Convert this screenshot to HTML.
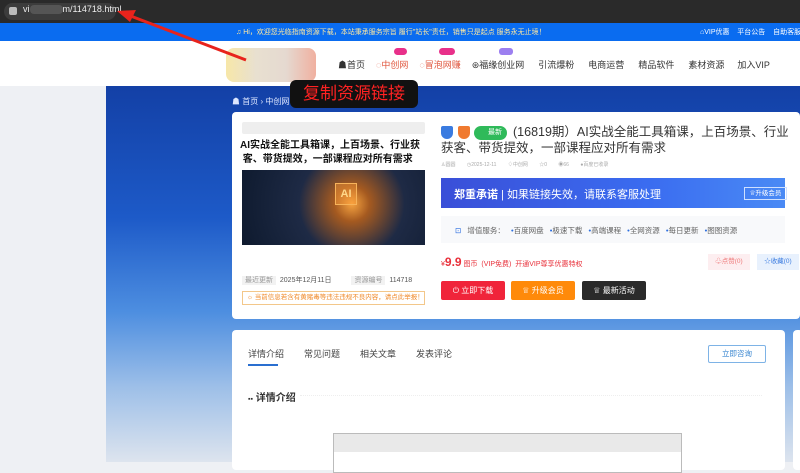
<!DOCTYPE html>
<html><head><meta charset="utf-8"><style>
*{margin:0;padding:0;box-sizing:border-box}
body{width:800px;height:462px;overflow:hidden;position:relative;font-family:"Liberation Sans","Noto Sans CJK SC",sans-serif;background:#eef0f4;font-size:12px;color:#333}
.abs{position:absolute;white-space:nowrap}
</style></head><body>
<div class="abs" style="left:0;top:0;width:800px;height:23px;background:#2a2a2a"></div>
<div class="abs" style="left:4px;top:3px;width:112px;height:17px;border-radius:9px;background:#3c3c3c"></div>
<div class="abs" style="left:9px;top:7px;width:8px;height:8px;border-radius:2px;background:#bbb"></div>
<div class="abs" style="left:23px;top:4px;color:#eee;font-size:9px">vi<span style="display:inline-block;width:33px;height:9px;background:#555;border-radius:4px;vertical-align:middle"></span>m/114718.html</div>
<div class="abs" style="left:0;top:23px;width:800px;height:18px;background:#0a6cf0"></div>
<div class="abs" style="left:236px;top:27px;color:#ffe9a0;font-size:7px">♫ Hi，欢迎您光临指南资源下载，本站秉承服务宗旨 履行"站长"责任，销售只是起点 服务永无止境！</div>
<div class="abs" style="left:700px;top:27px;color:#fff;font-size:7px">⌂VIP优惠 &nbsp; &nbsp;平台公告 &nbsp; &nbsp;自助客服</div>
<div class="abs" style="left:0;top:41px;width:800px;height:45px;background:#fff"></div>
<div class="abs" style="left:226px;top:48px;width:90px;height:34px;border-radius:8px;background:linear-gradient(90deg,#f7e7a8,#e8e0d0,#e5d9d0,#f0b0a0)"></div>
<div class="abs" style="left:338px;top:58px;font-size:9px;color:#333">
<span>☗首页</span><span style="margin-left:11px;color:#e0563d">◌中创网</span><span style="margin-left:11px;color:#e0563d">◌冒泡网赚</span><span style="margin-left:11px">⊛福缘创业网</span><span style="margin-left:14px">引流爆粉</span><span style="margin-left:14px">电商运营</span><span style="margin-left:14px">精品软件</span><span style="margin-left:14px">素材资源</span><span style="margin-left:13px">加入VIP</span></div>
<div class="abs" style="left:394px;top:48px;width:13px;height:7px;border-radius:4px;background:#e8308a"></div>
<div class="abs" style="left:439px;top:48px;width:16px;height:7px;border-radius:4px;background:#e8308a"></div>
<div class="abs" style="left:499px;top:48px;width:14px;height:7px;border-radius:3px;background:#9c7ff0"></div>
<div class="abs" style="left:106px;top:86px;width:694px;height:376px;background:linear-gradient(180deg,#1340a6 0%,#1d5ac8 35%,#4d8ee0 60%,#9dbfe8 80%,#dde4ee 100%)"></div>
<div class="abs" style="left:232px;top:96px;color:#dde6ff;font-size:8px">☗ 首页 › 中创网 ›</div>
<div class="abs" style="left:232px;top:112px;width:568px;height:207px;background:#fff;border-radius:4px"></div>
<div class="abs" style="left:242px;top:122px;width:183px;height:12px;background:#eee;border-radius:2px"></div>
<div class="abs" style="left:240px;top:139px;width:185px;font-size:10px;font-weight:bold;color:#111;line-height:14px;overflow:hidden">AI实战全能工具箱课，上百场景、行业获<br>&nbsp;客、带货提效，一部课程应对所有需求</div>
<div class="abs" style="left:242px;top:170px;width:183px;height:75px;background:radial-gradient(circle at 60% 45%,#f6a340 0%,#a55a20 15%,#1e2a45 45%,#0e1a2e 100%)"></div>
<div class="abs" style="left:335px;top:183px;width:22px;height:22px;border:1px solid #f7b35a;background:rgba(255,160,60,.4);color:#ffd88a;font-weight:bold;font-size:11px;text-align:center;line-height:20px">AI</div>
<div class="abs" style="left:242px;top:275px;width:183px;height:11px;font-size:7px;color:#555"><span style="background:#f2f2f2;padding:1px 3px;color:#999">最近更新</span>&nbsp; 2025年12月11日 <span style="margin-left:18px;background:#f2f2f2;padding:1px 3px;color:#999">资源编号</span>&nbsp; 114718</div>
<div class="abs" style="left:242px;top:291px;width:183px;height:14px;border:1px solid #f3c78a;color:#f08a2a;font-size:6.5px;line-height:12px;padding-left:4px;overflow:hidden">☼ 当前信息若含有黄赌毒等违法违规不良内容，请点此举报！</div>
<div class="abs" style="left:441px;top:126px;width:12px;height:13px;background:#3a7be0;border-radius:2px 2px 6px 6px"></div>
<div class="abs" style="left:458px;top:126px;width:12px;height:13px;background:#f07a30;border-radius:2px 2px 6px 6px"></div>
<div class="abs" style="left:474px;top:126px;width:33px;height:14px;background:#2fba5a;border-radius:7px;color:#fff;font-size:7px;line-height:14px;padding-left:14px">最新</div>
<div class="abs" style="left:441px;top:124px;width:355px;font-size:12.5px;line-height:16px;color:#333;white-space:normal;text-indent:72px">(16819期）AI实战全能工具箱课，上百场景、行业获客、带货提效，一部课程应对所有需求</div>
<div class="abs" style="left:441px;top:161px;font-size:5px;color:#aaa;word-spacing:10px">♙圆圆 ◷2025-12-11 ♢中创网 ☆0 ◉66 ●百度已收录</div>
<div class="abs" style="left:441px;top:178px;width:344px;height:30px;background:linear-gradient(90deg,#3a4fd8,#3a6cf0 60%,#4a8af5)"></div>
<div class="abs" style="left:454px;top:186px;color:#fff;font-size:11px"><b>郑重承诺</b> | 如果链接失效，请联系客服处理</div>
<div class="abs" style="left:744px;top:187px;width:43px;height:13px;border:1px solid #cfe0ff;color:#fff;font-size:6.5px;line-height:11px;text-align:center">♕升级会员</div>
<div class="abs" style="left:441px;top:216px;width:344px;height:27px;background:#f8f9fb"></div>
<div class="abs" style="left:455px;top:225px;font-size:7.5px;color:#666;word-spacing:4px"><span style="color:#2d6fe0">⊡</span> 增值服务： <span style="color:#2d6fe0">•</span>百度网盘 <span style="color:#2d6fe0">•</span>极速下载 <span style="color:#2d6fe0">•</span>高端课程 <span style="color:#2d6fe0">•</span>全网资源 <span style="color:#2d6fe0">•</span>每日更新 <span style="color:#2d6fe0">•</span>图图资源</div>
<div class="abs" style="left:441px;top:255px;color:#e8303a;font-size:7px">¥<b style="font-size:12px">9.9</b> 图币 &nbsp;(VIP免费) &nbsp;开通VIP尊享优惠特权</div>
<div class="abs" style="left:708px;top:254px;width:42px;height:16px;background:#fdeef0;color:#e77;font-size:6.5px;line-height:16px;text-align:center">♧点赞(0)</div>
<div class="abs" style="left:757px;top:254px;width:42px;height:16px;background:#e8f1fd;color:#3a7be0;font-size:6.5px;line-height:16px;text-align:center">☆收藏(0)</div>
<div class="abs" style="left:441px;top:281px;width:64px;height:19px;background:#f0243a;border-radius:2px;color:#fff;font-size:8px;line-height:19px;text-align:center">⏻ 立即下载</div>
<div class="abs" style="left:511px;top:281px;width:64px;height:19px;background:#ff8a0a;border-radius:2px;color:#fff;font-size:8px;line-height:19px;text-align:center">♕ 升级会员</div>
<div class="abs" style="left:582px;top:281px;width:64px;height:19px;background:#2a2a2a;border-radius:2px;color:#fff;font-size:8px;line-height:19px;text-align:center">♕ 最新活动</div>
<div class="abs" style="left:232px;top:330px;width:553px;height:140px;background:#fff;border-radius:4px"></div>
<div class="abs" style="left:793px;top:330px;width:10px;height:140px;background:#fff;border-radius:4px"></div>
<div class="abs" style="left:248px;top:347px;font-size:9px;color:#444"><span>详情介绍</span><span style="margin-left:20px">常见问题</span><span style="margin-left:20px">相关文章</span><span style="margin-left:20px">发表评论</span></div>
<div class="abs" style="left:248px;top:364px;width:30px;height:2px;background:#2a6fd0"></div>
<div class="abs" style="left:708px;top:345px;width:58px;height:18px;border:1px solid #7eb3e6;color:#3a86d0;font-size:7.5px;line-height:16px;text-align:center;border-radius:2px">立即咨询</div>
<div class="abs" style="left:248px;top:389px;font-size:10px;font-weight:bold;color:#333"><span style="font-size:7px">▪▪</span> 详情介绍</div>
<div class="abs" style="left:300px;top:395px;width:462px;border-top:1px dotted #eee"></div>
<div class="abs" style="left:333px;top:433px;width:349px;height:40px;border:1px solid #bbb;background:#fff"></div>
<div class="abs" style="left:334px;top:434px;width:347px;height:18px;background:#e9e9e9"></div>
<div class="abs" style="left:290px;top:80px;width:128px;height:28px;background:#111;border-radius:6px;color:#f22;font-size:17px;line-height:28px;text-align:center">复制资源链接</div>
<svg class="abs" style="left:0;top:0" width="800" height="462"><line x1="246" y1="60" x2="128" y2="15" stroke="#e8231c" stroke-width="3"/><polygon points="117,11 136,10 130,22" fill="#e8231c"/></svg>
</body></html>
